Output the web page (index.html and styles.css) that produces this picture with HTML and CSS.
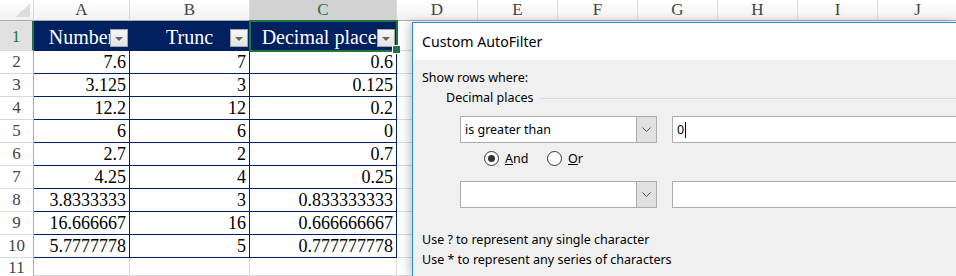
FILE: index.html
```html
<!DOCTYPE html>
<html lang="en">
<head>
  <meta charset="UTF-8" />
  <title>Custom AutoFilter</title>
  <link rel="stylesheet" href="styles.css">
</head>
<body>
  <div class="sheet">
    <!-- column headers -->
    <div class="colhead corner"></div>
    <div class="colhead">A</div>
    <div class="colhead">B</div>
    <div class="colhead active">C</div>
    <div class="colhead">D</div>
    <div class="colhead">E</div>
    <div class="colhead">F</div>
    <div class="colhead">G</div>
    <div class="colhead">H</div>
    <div class="colhead">I</div>
    <div class="colhead">J</div>

    <!-- row 1 -->
    <div class="rowhead active">1</div>
    <div class="cell t head">Number<span class="filter-btn"></span></div>
    <div class="cell t head">Trunc<span class="filter-btn"></span></div>
    <div class="cell t head selected">Decimal places<span class="filter-btn"></span></div>
    <div class="cell"></div>
    <div class="cell rest"></div>

    <div class="rowhead">2</div>
    <div class="cell t">7.6</div><div class="cell t">7</div><div class="cell t">0.6</div>
    <div class="cell"></div><div class="cell rest"></div>

    <div class="rowhead">3</div>
    <div class="cell t">3.125</div><div class="cell t">3</div><div class="cell t">0.125</div>
    <div class="cell"></div><div class="cell rest"></div>

    <div class="rowhead">4</div>
    <div class="cell t">12.2</div><div class="cell t">12</div><div class="cell t">0.2</div>
    <div class="cell"></div><div class="cell rest"></div>

    <div class="rowhead">5</div>
    <div class="cell t">6</div><div class="cell t">6</div><div class="cell t">0</div>
    <div class="cell"></div><div class="cell rest"></div>

    <div class="rowhead">6</div>
    <div class="cell t">2.7</div><div class="cell t">2</div><div class="cell t">0.7</div>
    <div class="cell"></div><div class="cell rest"></div>

    <div class="rowhead">7</div>
    <div class="cell t">4.25</div><div class="cell t">4</div><div class="cell t">0.25</div>
    <div class="cell"></div><div class="cell rest"></div>

    <div class="rowhead">8</div>
    <div class="cell t">3.8333333</div><div class="cell t">3</div><div class="cell t">0.833333333</div>
    <div class="cell"></div><div class="cell rest"></div>

    <div class="rowhead">9</div>
    <div class="cell t">16.666667</div><div class="cell t">16</div><div class="cell t">0.666666667</div>
    <div class="cell"></div><div class="cell rest"></div>

    <div class="rowhead">10</div>
    <div class="cell t">5.7777778</div><div class="cell t">5</div><div class="cell t">0.777777778</div>
    <div class="cell"></div><div class="cell rest"></div>

    <div class="rowhead last">11</div>
    <div class="cell"></div><div class="cell"></div><div class="cell"></div>
    <div class="cell"></div><div class="cell rest"></div>
  </div>

  <div class="dialog">
    <div class="dialog-title">Custom AutoFilter</div>
    <div class="dialog-body">
      <div class="line">Show rows where:</div>
      <div class="group"><span>Decimal places</span><span class="group-rule"></span></div>

      <div class="criteria">
        <div class="combo">
          <span class="combo-value">is greater than</span>
          <span class="combo-btn">
            <svg width="9" height="6" viewBox="0 0 9 6"><polyline points="0.5,0.5 4.5,4.5 8.5,0.5" fill="none" stroke="#555" stroke-width="1"/></svg>
          </span>
        </div>
        <div class="textbox">0<span class="caret"></span></div>
      </div>

      <div class="radios">
        <label class="radio"><span class="radio-circle checked"></span><span><u>A</u>nd</span></label>
        <label class="radio"><span class="radio-circle"></span><span><u>O</u>r</span></label>
      </div>

      <div class="criteria">
        <div class="combo">
          <span class="combo-value"></span>
          <span class="combo-btn">
            <svg width="9" height="6" viewBox="0 0 9 6"><polyline points="0.5,0.5 4.5,4.5 8.5,0.5" fill="none" stroke="#555" stroke-width="1"/></svg>
          </span>
        </div>
        <div class="textbox"></div>
      </div>

      <div class="hints">
        <div class="line">Use ? to represent any single character</div>
        <div class="line">Use * to represent any series of characters</div>
      </div>
    </div>
  </div>
</body>
</html>
```

FILE: styles.css
```css
* {
  box-sizing: border-box;
  margin: 0;
  padding: 0;
}

body {
  position: relative;
  width: 956px;
  height: 276px;
  overflow: hidden;
  background: #fff;
  font-family: "Liberation Serif", "Times New Roman", serif;
}

/* spreadsheet */
.sheet {
  display: grid;
  grid-template-columns: 34px 96px 120px 147px 81px repeat(6, 80px);
  grid-template-rows: 21px 30px repeat(9, 23px) 18px;
}

.colhead {
  position: relative;
  background: linear-gradient(#ffffff, #f2f2f2);
  border-right: 1px solid #d9d9d9;
  border-bottom: 1px solid #ababab;
  color: #444;
  font-size: 17px;
  line-height: 20px;
  text-align: center;
}

.colhead.active {
  background: #d2d2d2;
  color: #217346;
}

.corner::after {
  content: "";
  position: absolute;
  right: 3px;
  bottom: 3px;
  width: 15px;
  height: 13px;
  background: linear-gradient(to bottom right, transparent 50%, #dcdcdc 50%);
}

.rowhead {
  background: #fff;
  border-right: 1px solid #ababab;
  border-bottom: 1px solid #d9d9d9;
  color: #444;
  font-size: 17px;
  line-height: 22px;
  text-align: center;
}

.rowhead.active {
  background: #e1e1e1;
  color: #217346;
  border-right: 2px solid #217346;
  line-height: 32px;
}

.rowhead.last {
  border-bottom: none;
  line-height: 19px;
}

.cell {
  position: relative;
  border-right: 1px solid #d9d9d9;
  border-bottom: 1px solid #d9d9d9;
  font-size: 18px;
  line-height: 22px;
  text-align: right;
  padding-right: 3px;
  white-space: nowrap;
  overflow: hidden;
}

.cell.rest {
  grid-column: span 6;
}

.cell.t {
  border-color: #002060;
}

.cell.head {
  background: #002060;
  color: #fff;
  font-size: 20px;
  line-height: 32px;
  text-align: center;
  padding-right: 0;
}

.cell.selected {
  overflow: visible;
  outline: 2px solid #217346;
  outline-offset: -1px;
  z-index: 1;
}

.cell.selected::after {
  content: "";
  position: absolute;
  right: -5px;
  bottom: -4px;
  width: 7px;
  height: 7px;
  background: #217346;
  border: 1px solid #fff;
}

.filter-btn {
  position: absolute;
  right: 1px;
  bottom: 3px;
  width: 18px;
  height: 18px;
  background: linear-gradient(#f7f7f7, #e3e3e3);
  border: 1px solid #a6a6a6;
}

.filter-btn::after {
  content: "";
  position: absolute;
  left: 4px;
  top: 7px;
  border-left: 4px solid transparent;
  border-right: 4px solid transparent;
  border-top: 4px solid #666;
}

/* dialog */
.dialog {
  position: absolute;
  left: 412px;
  top: 22px;
  width: 544px;
  height: 254px;
  background: #f0f0f0;
  border-left: 1px solid #2b88d8;
  border-top: 1px solid #2b88d8;
  box-shadow: -3px 0 9px rgba(0, 0, 0, 0.22);
  font-family: "Noto Sans", "Open Sans", sans-serif;
  font-size: 12.5px;
  color: #000;
}

.dialog-title {
  height: 37px;
  background: #fff;
  padding-left: 9px;
  font-size: 14.2px;
  line-height: 38px;
}

.dialog-body {
  padding: 8px 0 0 9px;
}

.line {
  line-height: 20px;
}

.group {
  display: flex;
  align-items: center;
  margin-left: 24px;
  line-height: 20px;
}

.group-rule {
  flex: 1;
  margin-left: 6px;
  border-top: 1px solid #dadada;
}

.criteria {
  display: flex;
  gap: 15px;
  height: 27px;
  margin-top: 8px;
  margin-left: 38px;
}

.criteria + .hints {
  margin-top: 22px;
}

.combo {
  display: flex;
  width: 197px;
  background: #fff;
  border: 1px solid #acacac;
}

.combo-value {
  flex: 1;
  padding-left: 4px;
  line-height: 25px;
}

.combo-btn {
  display: flex;
  align-items: center;
  justify-content: center;
  width: 20px;
  background: #e1e1e1;
  border-left: 1px solid #acacac;
}

.textbox {
  flex: 1;
  display: flex;
  align-items: center;
  padding-left: 4px;
  background: #fff;
  border: 1px solid #acacac;
  border-right: none;
}

.caret {
  display: inline-block;
  width: 1px;
  height: 16px;
  margin-left: 1px;
  background: #000;
}

.radios {
  display: flex;
  align-items: center;
  height: 30px;
  margin-left: 62px;
}

.radio {
  display: flex;
  align-items: center;
  gap: 6px;
  width: 63px;
}

.radio-circle {
  position: relative;
  width: 15px;
  height: 15px;
  background: #fff;
  border: 1px solid #333;
  border-radius: 50%;
}

.radio-circle.checked::after {
  content: "";
  position: absolute;
  left: 3px;
  top: 3px;
  width: 7px;
  height: 7px;
  background: #333;
  border-radius: 50%;
}
```
